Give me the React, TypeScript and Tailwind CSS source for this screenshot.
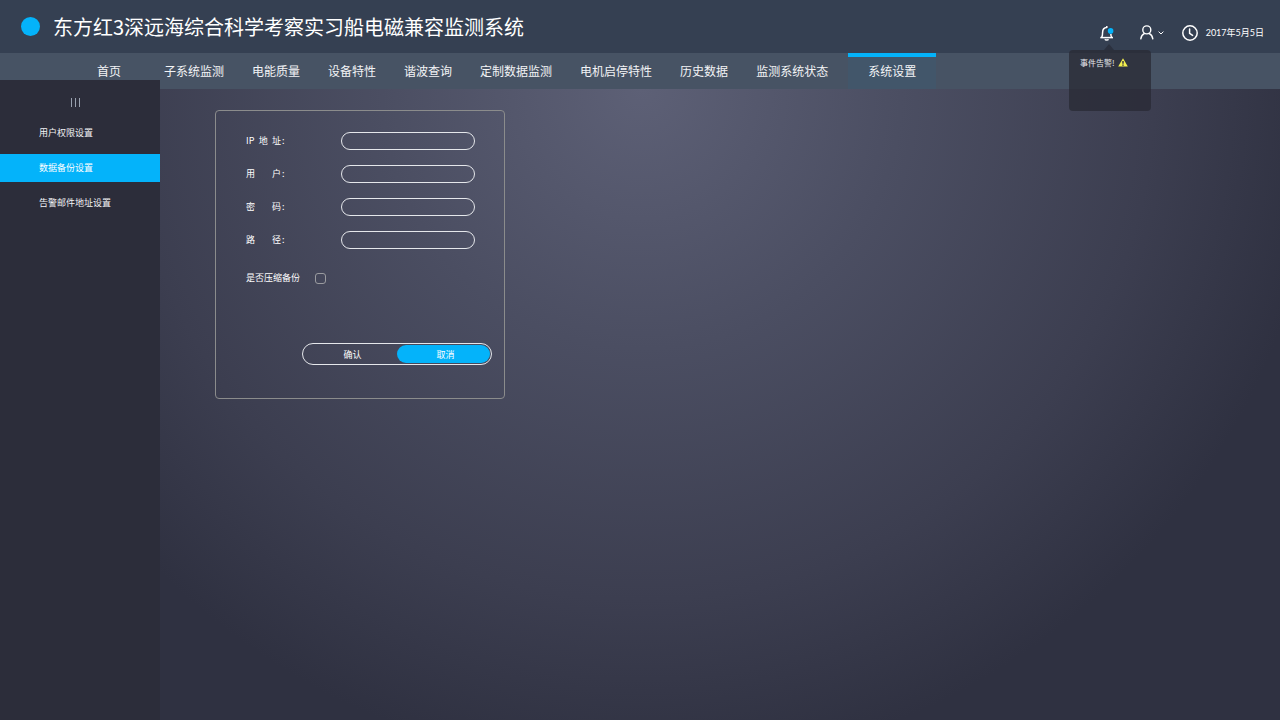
import * as React from "react";
import { clsx } from "clsx";

const navItems = ["子系统监测", "电能质量", "设备特性", "谐波查询", "定制数据监测", "电机启停特性", "历史数据", "监测系统状态"];

const sideItems = [
  { label: "用户权限设置", active: false },
  { label: "数据备份设置", active: true },
  { label: "告警邮件地址设置", active: false },
];

const fields = [
  { id: "ip", parts: ["IP", "地", "址"] },
  { id: "user", parts: ["用", "户"] },
  { id: "password", parts: ["密", "码"] },
  { id: "path", parts: ["路", "径"] },
];

function BellIcon() {
  return (
    <svg width="14" height="16" viewBox="0 0 14 16" fill="none" stroke="#fff" strokeWidth="1.5">
      <path d="M0.3 12.6H13" />
      <path d="M1.6 12.4C2.5 11.4 2.6 10.4 2.6 7.4C2.6 4.4 4.2 2.8 6.8 2.6" />
      <path d="M10.8 8.2C10.8 10.6 11 11.6 11.8 12.4" />
      <path d="M6.8 3V0.9" />
      <path d="M5 14.2C5.4 15.4 8 15.4 8.4 14.2" />
      <circle cx="10.6" cy="5.9" r="3.2" fill="#354052" stroke="none" />
      <circle cx="10.6" cy="5.9" r="2.8" fill="#04b3fa" stroke="none" />
    </svg>
  );
}

function UserIcon() {
  return (
    <svg width="14" height="15" viewBox="0 0 14 15" fill="none" stroke="#fff" strokeWidth="1.4" strokeLinecap="round">
      <circle cx="6.8" cy="4.9" r="4" />
      <path d="M0.8 13.8C1.1 11.4 2.5 9.4 4.6 8.4" />
      <path d="M12.8 13.8C12.5 11.4 11.1 9.4 9 8.4" />
    </svg>
  );
}

function ClockIcon() {
  return (
    <svg width="16" height="16" viewBox="0 0 16 16" fill="none" stroke="#fff" strokeWidth="1.5" strokeLinecap="round">
      <circle cx="8" cy="8" r="7.2" />
      <path d="M7.6 4V8.4L10.6 10.4" />
    </svg>
  );
}

function WarningIcon() {
  return (
    <svg width="10" height="9" viewBox="0 0 10 9">
      <path d="M5 0.3L9.8 8.6H0.2Z" fill="#f4f04e" />
      <path d="M5 3V5.8M5 6.6V7.7" stroke="#2e2f3c" strokeWidth="1.4" />
    </svg>
  );
}

function AlertPopover() {
  return (
    <div className="absolute top-[50px] right-[129px] z-10 h-[61px] w-[82px] rounded bg-[#282934]/75 px-[11px] pt-2">
      <svg className="absolute -top-[6px] left-[35px]" width="10" height="6" viewBox="0 0 10 6">
        <path d="M5 0L10 6H0Z" fill="#2b313f" />
      </svg>
      <p className="flex items-center gap-[3px] text-[8px] leading-[8px] whitespace-nowrap text-gray-200">
        事件告警!
        <WarningIcon />
      </p>
    </div>
  );
}

function Header() {
  return (
    <header className="relative flex h-[53px] items-center justify-between bg-[#354052] pr-4 pl-[21px]">
      <div className="flex items-center gap-[13px]">
        <span className="size-[19px] rounded-full bg-[#04b3fa]" />
        <h1 className="text-[20px] leading-6 text-white">东方红3深远海综合科学考察实习船电磁兼容监测系统</h1>
      </div>
      <div className="flex items-center pt-3">
        <button type="button" aria-label="告警" className="mr-[26px]">
          <BellIcon />
        </button>
        <button type="button" aria-label="用户" className="mr-[18px] flex items-center gap-1">
          <UserIcon />
          <svg width="6" height="4" viewBox="0 0 6 4" fill="none" stroke="#fff">
            <path d="M0.6 0.6L3 3L5.4 0.6" />
          </svg>
        </button>
        <ClockIcon />
        <time dateTime="2017-05-05" className="ml-2 font-['Lato','Noto_Sans_CJK_SC',sans-serif] text-[9px] leading-4 text-white">
          2017年5月5日
        </time>
      </div>
      <AlertPopover />
    </header>
  );
}

function NavBar() {
  return (
    <nav className="flex h-9 bg-[#475364] pl-[97px] text-[12px] leading-9 whitespace-nowrap text-gray-100">
      <a href="#" className="mr-[43px]">首页</a>
      <div className="flex gap-7">
        {navItems.map((item) => (
          <a key={item} href="#">{item}</a>
        ))}
      </div>
      <a href="#" className="ml-5 border-t-4 border-[#04b3fa] bg-[#42566a] px-5 leading-7">系统设置</a>
    </nav>
  );
}

function SideBar() {
  return (
    <aside className="relative -mt-[9px] w-40 shrink-0 bg-[#2c2d3a] pt-[18px]">
      <button type="button" aria-label="菜单" className="ml-[71px] flex h-[9px] w-[9px] justify-between">
        <span className="h-full w-px bg-gray-400" />
        <span className="h-full w-px bg-gray-400" />
        <span className="h-full w-px bg-gray-400" />
      </button>
      <ul className="mt-3 flex flex-col gap-[7px] text-[9px] leading-7 text-gray-100">
        {sideItems.map((item) => (
          <li key={item.label} className={clsx("pl-[39px]", item.active && "bg-[#04b3fa] text-white")}>
            <a href="#">{item.label}</a>
          </li>
        ))}
      </ul>
    </aside>
  );
}

function BackupForm() {
  const [compress, setCompress] = React.useState(false);
  return (
    <form className="mt-[21px] ml-[55px] h-[289px] w-[290px] self-start rounded border border-[#8b8c8c] pt-[21px] pl-[30px] text-[9px] text-white">
      <div className="flex flex-col gap-[15px]">
        {fields.map((field) => (
          <div key={field.id} className="flex items-center">
            <label htmlFor={field.id} className="flex w-[95px] gap-px leading-[18px]">
              <span className="flex w-[35px] justify-between">
                {field.parts.map((part) => (
                  <span key={part}>{part}</span>
                ))}
              </span>
              :
            </label>
            <input
              id={field.id}
              type={field.id === "password" ? "password" : "text"}
              className="h-[18px] w-[134px] rounded-full border border-gray-200 bg-transparent px-2 outline-none"
            />
          </div>
        ))}
      </div>
      <div className="mt-5 flex items-center gap-[15px] leading-[18px]">
        <label htmlFor="compress">是否压缩备份</label>
        <input
          id="compress"
          type="checkbox"
          checked={compress}
          onChange={(e) => setCompress(e.target.checked)}
          className="size-[11px] appearance-none rounded-[3px] border border-[#9a9b9f] checked:bg-[#04b3fa]"
        />
      </div>
      <div className="mt-14 ml-14 flex h-[22px] w-[190px] rounded-full border border-gray-200 p-px">
        <button type="submit" className="flex-1 pt-px pl-1">确认</button>
        <button type="button" className="w-[93px] rounded-full bg-[#04b3fa] pt-px pl-1">取消</button>
      </div>
    </form>
  );
}

export default function App() {
  return (
    <div className="flex min-h-screen flex-col bg-[#2c2d3a] font-['Noto_Sans_CJK_SC',sans-serif]">
      <Header />
      <NavBar />
      <div className="flex flex-1">
        <SideBar />
        <main className="flex flex-1 bg-[radial-gradient(61%_108%_at_43%_0%,#5d6076_0%,#4b4e62_38%,#3c3e50_75%,#2f3141_100%)]">
          <BackupForm />
        </main>
      </div>
    </div>
  );
}
